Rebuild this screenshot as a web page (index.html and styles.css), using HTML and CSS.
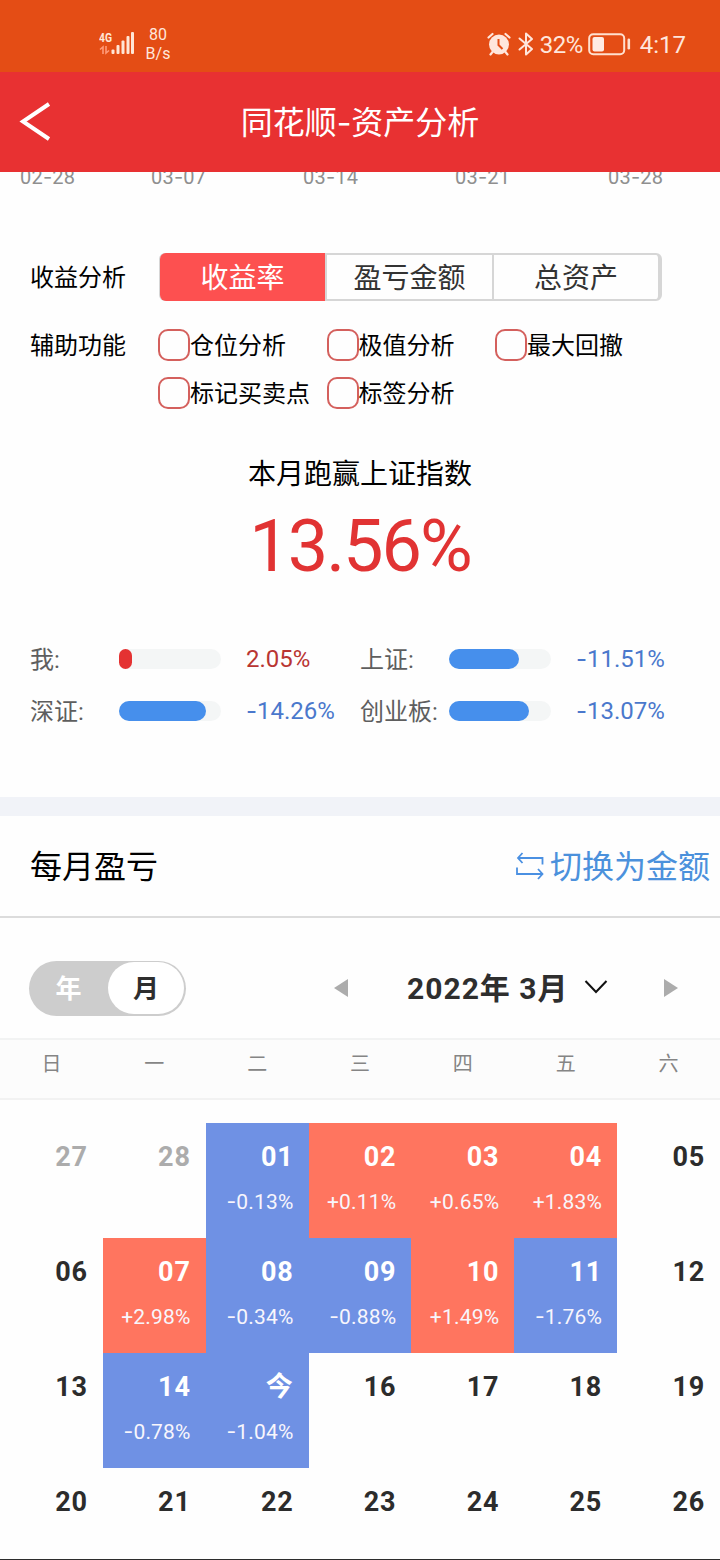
FILE: index.html
```html
<!DOCTYPE html>
<html lang="zh-CN">
<head>
    <meta charset="UTF-8">
    <meta name="viewport" content="width=device-width, initial-scale=1.0">
    <title>同花顺-资产分析</title>
    <link rel="stylesheet" href="styles.css">
</head>
<body>
    <div class="status-bar">
        <svg class="signal" width="36" height="26" viewBox="0 0 36 26" fill="#ffe6d6">
            <text x="0" y="11" font-size="12" font-weight="bold" textLength="13" lengthAdjust="spacingAndGlyphs">4G</text>
            <path d="M4 23v-7l-3 2.500M7 15v7l3-2.500" fill="none" stroke="#ff9a78" stroke-width="1.600"/>
            <rect x="12.500" y="18.500" width="3" height="4.500" rx="1"/>
            <rect x="17.500" y="14" width="3" height="9" rx="1"/>
            <rect x="22.500" y="9.500" width="3" height="13.500" rx="1"/>
            <rect x="27.500" y="5" width="3" height="18" rx="1"/>
            <rect x="32" y="1" width="3" height="22" rx="1"/>
        </svg>
        <div class="speed"><span>80</span><span>B/s</span></div>
        <div class="status-right">
            <svg width="24" height="24" viewBox="0 0 24 24">
                <circle cx="12" cy="12.500" r="10" fill="#ffe6dc"/>
                <path d="M1.500 5.500l4-3.500M22.500 5.500l-4-3.500M5.500 20l-2 2.500M18.500 20l2 2.500" stroke="#ffe6dc" stroke-width="2.200" stroke-linecap="round"/>
                <path d="M11.500 7v6l4 4" fill="none" stroke="#e44d15" stroke-width="2"/>
            </svg>
            <svg class="bluetooth" width="16" height="26" viewBox="0 0 16 26">
                <path d="M1.500 7.500L14 18l-6 5.500v-21L14 8 1.500 18.500" fill="none" stroke="#ffe6dc" stroke-width="2" stroke-linejoin="round" stroke-linecap="round"/>
            </svg>
            <span class="battery-text">32%</span>
            <svg class="battery" width="43" height="24" viewBox="0 0 43 24">
                <rect x="1.200" y="2.200" width="35" height="20" rx="4" fill="none" stroke="#ffe0cf" stroke-width="2"/>
                <rect x="4.500" y="5" width="11.500" height="14.500" rx="2" fill="#ffebe3"/>
                <rect x="39.500" y="6.500" width="2.600" height="11" rx="1.300" fill="#ffe0cf"/>
            </svg>
            <span class="clock">4:17</span>
        </div>
    </div>

    <header class="header">
        <svg class="back" width="34" height="42" viewBox="0 0 34 42">
            <path d="M31 3L5 20.500 31 38" fill="none" stroke="#fff" stroke-width="4"/>
        </svg>
        <h1>同花顺<i class="dash">-</i>资产分析</h1>
    </header>

    <div class="axis">
        <span>02<i class="dash">-</i>28</span>
        <span>03<i class="dash">-</i>07</span>
        <span>03<i class="dash">-</i>14</span>
        <span>03<i class="dash">-</i>21</span>
        <span>03<i class="dash">-</i>28</span>
    </div>

    <section class="options">
        <div class="label">收益分析</div>
        <div class="segment">
            <div class="segment-item active">收益率</div>
            <div class="segment-item">盈亏金额</div>
            <div class="segment-item">总资产</div>
        </div>
        <div class="label">辅助功能</div>
        <div class="checks">
            <div class="check"><i></i><span>仓位分析</span></div>
            <div class="check"><i></i><span>极值分析</span></div>
            <div class="check"><i></i><span>最大回撤</span></div>
            <div class="check"><i></i><span>标记买卖点</span></div>
            <div class="check"><i></i><span>标签分析</span></div>
        </div>
    </section>

    <section class="beat">
        <div class="beat-title">本月跑赢上证指数</div>
        <div class="beat-value">13.56%</div>
    </section>

    <section class="compare">
        <div class="compare-item">
            <span class="name">我:</span>
            <div class="track"><div class="bar red" style="width: 13px"></div></div>
            <span class="value up">2.05%</span>
        </div>
        <div class="compare-item">
            <span class="name">上证:</span>
            <div class="track"><div class="bar" style="width: 70px"></div></div>
            <span class="value"><i class="dash">-</i>11.51%</span>
        </div>
        <div class="compare-item">
            <span class="name">深证:</span>
            <div class="track"><div class="bar" style="width: 87px"></div></div>
            <span class="value"><i class="dash">-</i>14.26%</span>
        </div>
        <div class="compare-item">
            <span class="name">创业板:</span>
            <div class="track"><div class="bar" style="width: 80px"></div></div>
            <span class="value"><i class="dash">-</i>13.07%</span>
        </div>
    </section>

    <div class="section-head">
        <h2>每月盈亏</h2>
        <div class="switch-link">
            <svg width="28" height="28" viewBox="0 0 28 28" fill="none" stroke="#4a90e2" stroke-width="1.800">
                <path d="M6.500 1L2 6l4.500 5M2 6h24.500v6.500M22 17l4.500 5-4.500 5M26.500 22H1v-6.500"/>
            </svg>
            <span>切换为金额</span>
        </div>
    </div>

    <div class="month-bar">
        <div class="toggle">
            <span>年</span>
            <span class="on">月</span>
        </div>
        <svg class="prev" width="14" height="20" viewBox="0 0 14 20"><path d="M14 1v18L0 10z" fill="#acacac"/></svg>
        <div class="month">2022年 3月</div>
        <svg class="down" width="24" height="16" viewBox="0 0 24 16"><path d="M1.500 1L12 12 22.500 1" fill="none" stroke="#111" stroke-width="2"/></svg>
        <svg class="next" width="14" height="20" viewBox="0 0 14 20"><path d="M0 1v18l14-9z" fill="#acacac"/></svg>
    </div>

    <div class="weekdays">
        <span>日</span><span>一</span><span>二</span><span>三</span><span>四</span><span>五</span><span>六</span>
    </div>

    <div class="calendar">
        <div class="day other"><b>27</b></div>
        <div class="day other"><b>28</b></div>
        <div class="day loss"><b>01</b><span><i class="dash">-</i>0.13%</span></div>
        <div class="day gain"><b>02</b><span>+0.11%</span></div>
        <div class="day gain"><b>03</b><span>+0.65%</span></div>
        <div class="day gain"><b>04</b><span>+1.83%</span></div>
        <div class="day"><b>05</b></div>

        <div class="day"><b>06</b></div>
        <div class="day gain"><b>07</b><span>+2.98%</span></div>
        <div class="day loss"><b>08</b><span><i class="dash">-</i>0.34%</span></div>
        <div class="day loss"><b>09</b><span><i class="dash">-</i>0.88%</span></div>
        <div class="day gain"><b>10</b><span>+1.49%</span></div>
        <div class="day loss"><b>11</b><span><i class="dash">-</i>1.76%</span></div>
        <div class="day"><b>12</b></div>

        <div class="day"><b>13</b></div>
        <div class="day loss"><b>14</b><span><i class="dash">-</i>0.78%</span></div>
        <div class="day loss"><b>今</b><span><i class="dash">-</i>1.04%</span></div>
        <div class="day"><b>16</b></div>
        <div class="day"><b>17</b></div>
        <div class="day"><b>18</b></div>
        <div class="day"><b>19</b></div>

        <div class="day"><b>20</b></div>
        <div class="day"><b>21</b></div>
        <div class="day"><b>22</b></div>
        <div class="day"><b>23</b></div>
        <div class="day"><b>24</b></div>
        <div class="day"><b>25</b></div>
        <div class="day"><b>26</b></div>
    </div>
</body>
</html>
```
FILE: styles.css
```css
* {
    box-sizing: border-box;
}
body {
    margin: 0;
    width: 720px;
    height: 1560px;
    overflow: hidden;
    display: flex;
    flex-direction: column;
    background: #fefefe;
    color: #000;
    font-family: Roboto, "Noto Sans CJK SC", sans-serif;
    border-bottom: 1px solid #2c2c2c;
}
body > * {
    flex-shrink: 0;
}
h1, h2 {
    margin: 0;
    font-weight: normal;
}
svg {
    display: block;
    flex-shrink: 0;
}
/* wider hyphen */
.dash {
    font-family: Inter, sans-serif;
    font-style: normal;
    line-height: 1;
}

/* status bar */
.status-bar {
    height: 72px;
    background: #e44d15;
    color: #ffe6dc;
    display: flex;
    align-items: center;
    padding: 16px 34px 0 99px;
}
.speed {
    display: flex;
    flex-direction: column;
    align-items: center;
    width: 28px;
    margin-left: 9px;
    font-size: 16px;
    line-height: 19px;
}
.status-right {
    display: flex;
    align-items: center;
    margin-left: auto;
    font-size: 24px;
    line-height: 30px;
}
.bluetooth {
    margin-left: 7px;
}
.battery-text {
    margin: 1px 5px 0 6px;
    letter-spacing: -0.5px;
}
.clock {
    margin: 1px 0 0 9px;
}

/* title bar */
.header {
    height: 100px;
    background: #e83132;
    color: #fff;
    display: grid;
    grid-template-columns: 54px 1fr 54px;
    align-items: center;
}
.back {
    margin-left: 18px;
}
.header h1 {
    padding-top: 2px;
    text-align: center;
    font-size: 32px;
    line-height: 48px;
}

/* chart axis, scrolled under the header */
.axis {
    height: 81px;
    overflow: hidden;
    display: grid;
    grid-template-columns: 131px 152px 152px 153px 1fr;
    padding-left: 20px;
    color: #8f8f8f;
    font-size: 20px;
    line-height: 24px;
    letter-spacing: 0.2px;
}
.axis span {
    margin-top: -7px;
}

/* options */
.options {
    display: grid;
    grid-template-columns: 128px 1fr;
    row-gap: 20px;
    padding: 0 58px 0 30px;
    font-size: 24px;
}
.label {
    height: 48px;
    line-height: 50px;
}
.segment {
    display: grid;
    grid-template-columns: 165px 169px 1fr;
    height: 48px;
    margin-left: 1px;
    width: 503px;
    border: 2px solid #d6d6d6;
    border-left-width: 1px;
    border-right-width: 4px;
    border-radius: 6px;
    font-size: 28px;
    line-height: 47px;
    text-align: center;
    color: #333;
}
.segment-item {
    height: 44px;
    border-right: 2px solid #d6d6d6;
}
.segment-item + .segment-item {
    border-left: 2px solid #d6d6d6;
}
.segment-item:last-child {
    border-left: none;
    border-right: none;
}
.segment-item.active {
    height: 48px;
    margin: -2px 0;
    border-right: none;
    border-radius: 6px 0 0 6px;
    background: #fd5050;
    color: #fff;
    line-height: 51px;
}
.checks {
    display: grid;
    grid-template-columns: 168.5px 168.5px 168.5px;
    grid-auto-rows: 48px;
}
.check {
    display: flex;
    align-items: center;
    white-space: nowrap;
}
.check i {
    width: 32px;
    height: 32px;
    border: 2px solid #d4605d;
    border-radius: 10px;
}
.check span {
    padding-bottom: 4px;
}

/* this month vs index */
.beat {
    margin-top: 38px;
    height: 178px;
    text-align: center;
}
.beat-title {
    font-size: 28px;
    line-height: 40px;
}
.beat-value {
    margin-top: 2px;
    color: #e13333;
    font-size: 72px;
    line-height: 100px;
    letter-spacing: -2px;
}
.compare {
    display: grid;
    grid-template-columns: 330px 330px;
    grid-auto-rows: 52px;
    height: 164px;
    padding-left: 30px;
}
.compare-item {
    display: grid;
    grid-template-columns: 89px 102px 1fr;
    align-items: center;
    font-size: 24px;
    white-space: nowrap;
}
.name {
    padding-bottom: 4px;
    color: #5e5e5e;
}
.track {
    height: 20px;
    border-radius: 10px;
    background: #f4f6f6;
}
.bar {
    height: 20px;
    border-radius: 10px;
    background: #468fec;
}
.bar.red {
    border-radius: 7px;
    background: #e43232;
}
.value {
    padding-left: 25px;
    line-height: 28px;
    color: #4a78cc;
}
.value.up {
    color: #b93532;
}

/* monthly section */
.section-head {
    display: flex;
    align-items: center;
    justify-content: space-between;
    height: 121px;
    padding: 0 10px 0 30px;
    border-top: 19px solid #f1f3f8;
    border-bottom: 2px solid #dcdcdc;
    font-size: 32px;
}
.section-head h2 {
    padding-bottom: 4px;
    font-size: 32px;
}
.switch-link {
    display: flex;
    align-items: center;
    gap: 6px;
    color: #4b91dc;
}
.switch-link span {
    padding-bottom: 4px;
}
.month-bar {
    display: flex;
    align-items: center;
    height: 120px;
    padding: 20px 42px 0 29px;
    color: #2e2e2e;
    font-weight: bold;
}
.toggle {
    display: grid;
    grid-template-columns: 1fr 76px;
    width: 157px;
    height: 55px;
    padding: 1px 2px 2px 0;
    border-radius: 28px;
    background: #cdcdcd;
    color: #fff;
    font-size: 26px;
    line-height: 54px;
    text-align: center;
}
.toggle span {
    height: 52px;
}
.toggle .on {
    border-radius: 26px;
    background: #fff;
    color: #2e2e2e;
}
.prev {
    margin-left: 148px;
}
.month {
    width: 162px;
    margin-left: 59px;
    padding-bottom: 4px;
    font-size: 30px;
    letter-spacing: 1px;
    white-space: nowrap;
}
.down {
    margin-left: 15px;
}
.next {
    margin-left: auto;
}
.weekdays {
    display: grid;
    grid-template-columns: repeat(7, 1fr);
    height: 62px;
    border-top: 2px solid #f2f3f3;
    border-bottom: 2px solid #f2f2f2;
    background: #fcfcfc;
    color: #858585;
    font-size: 20px;
    line-height: 48px;
    text-align: center;
}
.calendar {
    display: grid;
    grid-template-columns: repeat(7, 1fr);
    grid-auto-rows: 115px;
    margin-top: 23px;
}
.day {
    display: flex;
    flex-direction: column;
    align-items: flex-end;
    padding: 18px 15px 0 0;
    color: #2c2c2c;
}
.day b {
    height: 32px;
    font-size: 27px;
    line-height: 32px;
    letter-spacing: 0.8px;
}
.day span {
    height: 28px;
    margin-top: 15px;
    font-size: 21px;
    line-height: 28px;
    letter-spacing: 0.2px;
    color: #f8f6fc;
}
.day.other {
    color: #acacac;
}
.day.gain {
    background: #ff755f;
    color: #fff;
}
.day.loss {
    background: #6f91e4;
    color: #fff;
}
```
